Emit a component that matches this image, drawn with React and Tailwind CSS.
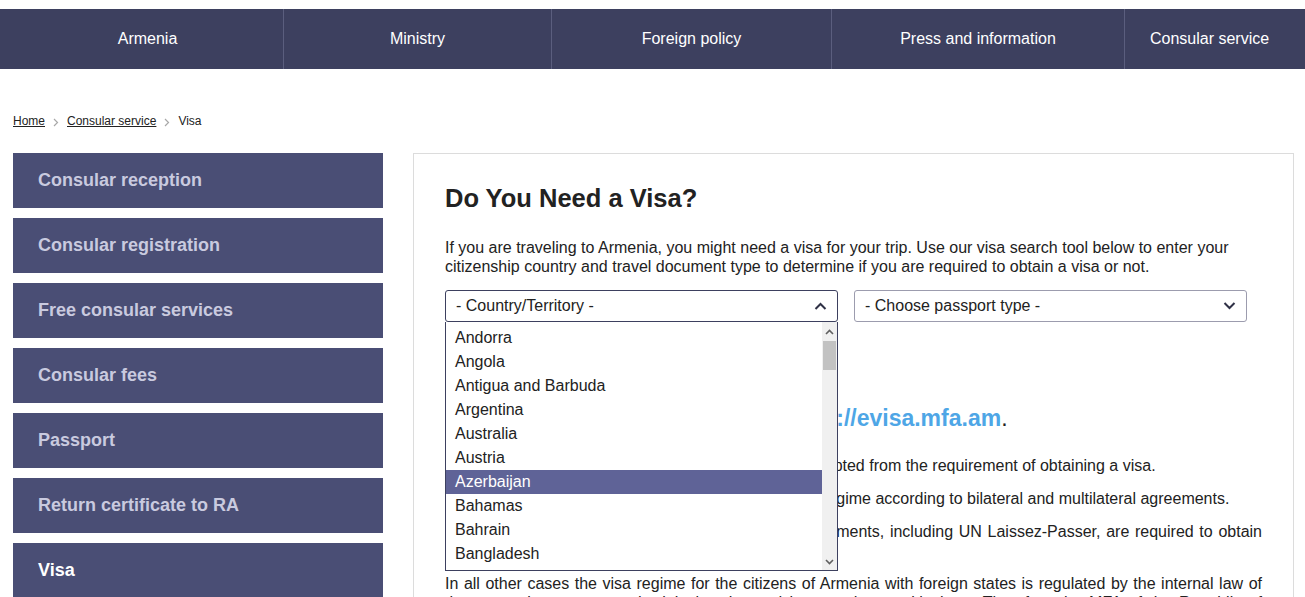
import React from 'react';

const navItems = [
  { label: 'Armenia', width: 'w-[283px] pl-[12px]' },
  { label: 'Ministry', width: 'w-[268px]' },
  { label: 'Foreign policy', width: 'w-[280px]' },
  { label: 'Press and information', width: 'w-[293px]' },
  { label: 'Consular service', width: 'w-[170px]' },
];

const sideItems = [
  'Consular reception',
  'Consular registration',
  'Free consular services',
  'Consular fees',
  'Passport',
  'Return certificate to RA',
  'Visa',
];

const countries = [
  'Andorra',
  'Angola',
  'Antigua and Barbuda',
  'Argentina',
  'Australia',
  'Austria',
  'Azerbaijan',
  'Bahamas',
  'Bahrain',
  'Bangladesh',
];

const Crumb = () => (
  <svg width="6" height="9" viewBox="0 0 6 9" className="mt-[3px]">
    <path d="M1 1 L4.5 4.5 L1 8" fill="none" stroke="#a8a8a8" strokeWidth="1.2" />
  </svg>
);

const Chevron = ({ up }) => (
  <svg width="13" height="8" viewBox="0 0 13 8">
    <path
      d={up ? 'M1.5 7 L6.5 2 L11.5 7' : 'M1.5 1 L6.5 6 L11.5 1'}
      fill="none"
      stroke="#2f3146"
      strokeWidth="2"
    />
  </svg>
);

const ScrollArrow = ({ up }) => (
  <svg width="9" height="6" viewBox="0 0 9 6">
    <path
      d={up ? 'M1 5 L4.5 1.5 L8 5' : 'M1 1 L4.5 4.5 L8 1'}
      fill="none"
      stroke="#606060"
      strokeWidth="1.6"
    />
  </svg>
);

export default function App() {
  return (
    <div className="min-h-screen bg-white font-['Liberation_Sans',Arial,sans-serif] text-[#222]">
      {/* top menu */}
      <nav className="mt-[9px] flex h-[60px] bg-[#3d405f] text-white">
        {navItems.map((item, i) => (
          <div
            key={item.label}
            className={`${item.width} flex items-center justify-center text-[16px] ${
              i > 0 ? 'border-l border-[#5b5e7e]' : ''
            }`}
          >
            {item.label}
          </div>
        ))}
      </nav>

      {/* breadcrumbs */}
      <div className="mt-[45px] flex items-center gap-[8px] pl-[13px] text-[12px] leading-[14px]">
        <span className="underline">Home</span>
        <Crumb />
        <span className="underline">Consular service</span>
        <Crumb />
        <span>Visa</span>
      </div>

      <div className="mt-[25px] flex gap-[30px] pl-[13px]">
        {/* side menu */}
        <aside className="flex w-[370px] shrink-0 flex-col gap-[10px]">
          {sideItems.map(item => (
            <div
              key={item}
              className={`flex h-[55px] items-center bg-[#4a4e75] pl-[25px] text-[18px] font-bold ${
                item === 'Visa' ? 'text-white' : 'text-[#c9cadf]'
              }`}
            >
              {item}
            </div>
          ))}
        </aside>

        {/* content */}
        <main className="w-[881px] shrink-0 border border-[#dcdcdc] px-[31px] pt-[29px] pb-10">
          <h1 className="text-[25.5px] font-bold leading-[30px] text-[#222]">Do You Need a Visa?</h1>
          <p className="mt-[25px] text-[16px] leading-[19px]">
            If you are traveling to Armenia, you might need a visa for your trip. Use our visa search tool below to enter your
            citizenship country and travel document type to determine if you are required to obtain a visa or not.
          </p>

          <div className="mt-[14px] flex gap-[16px]">
            <div className="relative w-[393px]">
              <div className="flex h-[32px] items-center justify-between rounded-[3px] border border-[#3d405f] pl-[10px] pr-[10px] text-[16px]">
                <span>- Country/Territory -</span>
                <Chevron up />
              </div>
              {/* opened list */}
              <div className="absolute left-0 top-full z-10 flex h-[249px] w-full border border-t-0 border-[#3d405f] bg-white">
                <ul className="flex-1 pt-[4px]">
                  {countries.map(c => (
                    <li
                      key={c}
                      className={`flex h-[24px] items-center pl-[9px] text-[16px] ${
                        c === 'Azerbaijan' ? 'bg-[#5f6397] text-white' : 'text-[#222]'
                      }`}
                    >
                      {c}
                    </li>
                  ))}
                </ul>
                <div className="flex w-[15px] flex-col bg-[#f0f0f0]">
                  <div className="flex h-[19px] items-center justify-center">
                    <ScrollArrow up />
                  </div>
                  <div className="mx-[1px] h-[29px] bg-[#c2c2c2]" />
                  <div className="flex-1" />
                  <div className="flex h-[17px] items-center justify-center">
                    <ScrollArrow />
                  </div>
                </div>
              </div>
            </div>
            <div className="flex h-[32px] w-[393px] items-center justify-between rounded-[3px] border border-[#9c9cae] pl-[10px] pr-[10px] text-[16px]">
              <span>- Choose passport type -</span>
              <Chevron />
            </div>
          </div>

          <p className="mt-[82px] text-[23px] leading-[28px]">
            You can also apply for e-Visa on{' '}
            <span className="font-bold text-[#4ea6e6]">https://evisa.mfa.am</span>.
          </p>

          <div className="mt-[24px] text-justify text-[16px] leading-[19px]">
            <p className="mb-[14px]">
              Citizens of the following states and territories are exempted from the requirement of obtaining a visa.
            </p>
            <p className="mb-[14px]">
              Citizens of the following countries enjoy the visa-free regime according to bilateral and multilateral agreements.
            </p>
            <p className="mb-[14px]">
              Users of the following categories of official travel documents, including UN Laissez-Passer, are required to obtain
              an entry visa.
            </p>
            <p className="mb-[14px]">
              In all other cases the visa regime for the citizens of Armenia with foreign states is regulated by the internal law of
              the respective country and might be changed in accordance with them. Therefore the MFA of the Republic of Armenia
              recommends to contact the relevant diplomatic mission before the trip.
            </p>
          </div>
        </main>
      </div>
    </div>
  );
}
